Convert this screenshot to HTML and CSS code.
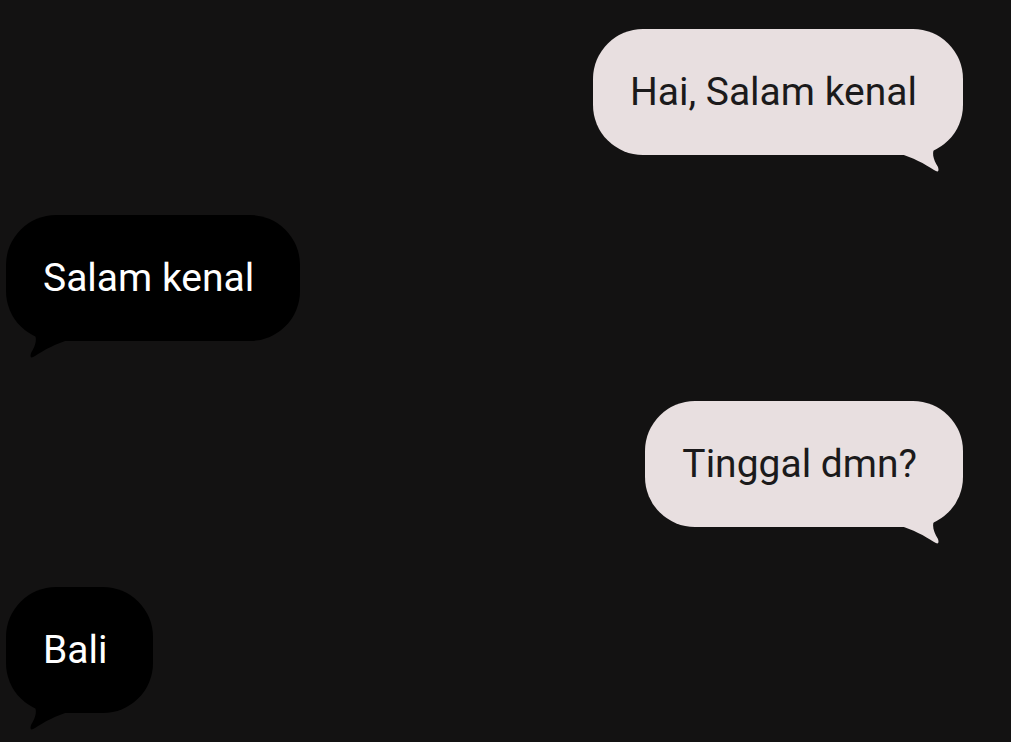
FILE: index.html
```html
<!DOCTYPE html>
<html lang="id">

<head>
    <meta charset="UTF-8">
    <meta name="viewport" content="width=device-width, initial-scale=1.0">
    <title>Chat</title>

    <link rel="stylesheet" href="styles.css">
</head>

<body>

    <div class="chat">
        <div class="row sent">
            <div class="bubble">
                Hai, Salam kenal
                <svg class="tail" viewBox="0 0 50 40" width="50" height="40">
                    <path d="M2 0 L2 19 L7 19 C19 22 32 29 41 35 Q47 39 45 32 C40 24 38 17 43 10 L43 0 Z" />
                </svg>
            </div>
        </div>

        <div class="row received">
            <div class="bubble">
                Salam kenal
                <svg class="tail" viewBox="0 0 50 40" width="50" height="40">
                    <path d="M48 0 L48 19 L43 19 C31 22 18 29 9 35 Q3 39 5 32 C10 24 12 17 7 10 L7 0 Z" />
                </svg>
            </div>
        </div>

        <div class="row sent">
            <div class="bubble">
                Tinggal dmn?
                <svg class="tail" viewBox="0 0 50 40" width="50" height="40">
                    <path d="M2 0 L2 19 L7 19 C19 22 32 29 41 35 Q47 39 45 32 C40 24 38 17 43 10 L43 0 Z" />
                </svg>
            </div>
        </div>

        <div class="row received">
            <div class="bubble">
                Bali
                <svg class="tail" viewBox="0 0 50 40" width="50" height="40">
                    <path d="M48 0 L48 19 L43 19 C31 22 18 29 9 35 Q3 39 5 32 C10 24 12 17 7 10 L7 0 Z" />
                </svg>
            </div>
        </div>
    </div>

</body>

</html>
```

FILE: styles.css
```css
body {
    margin: 0;
    background-color: #131212;
    font-family: Roboto, "Noto Sans", sans-serif;
}

.chat {
    display: flex;
    flex-direction: column;
    gap: 60px;
    min-height: 100vh;
    box-sizing: border-box;
    padding: 29px 48px 0 6px;
}

.row {
    display: flex;
}

.sent {
    justify-content: flex-end;
}

.received {
    justify-content: flex-start;
}

.bubble {
    position: relative;
    display: flex;
    align-items: center;
    height: 126px;
    box-sizing: border-box;
    padding: 0 46px 0 37px;
    border-radius: 50px;
    font-size: 39px;
    white-space: nowrap;
}

.sent .bubble {
    background-color: #e8dfe0;
    color: #1b1a1b;
}

.received .bubble {
    background-color: #000;
    color: #fff;
}

/* speech tail hanging from the bubble's bottom corner */
.tail {
    position: absolute;
    bottom: -20px;
}

.sent .tail {
    right: 20px;
    fill: #e8dfe0;
}

.received .tail {
    left: 20px;
    fill: #000;
}
```
